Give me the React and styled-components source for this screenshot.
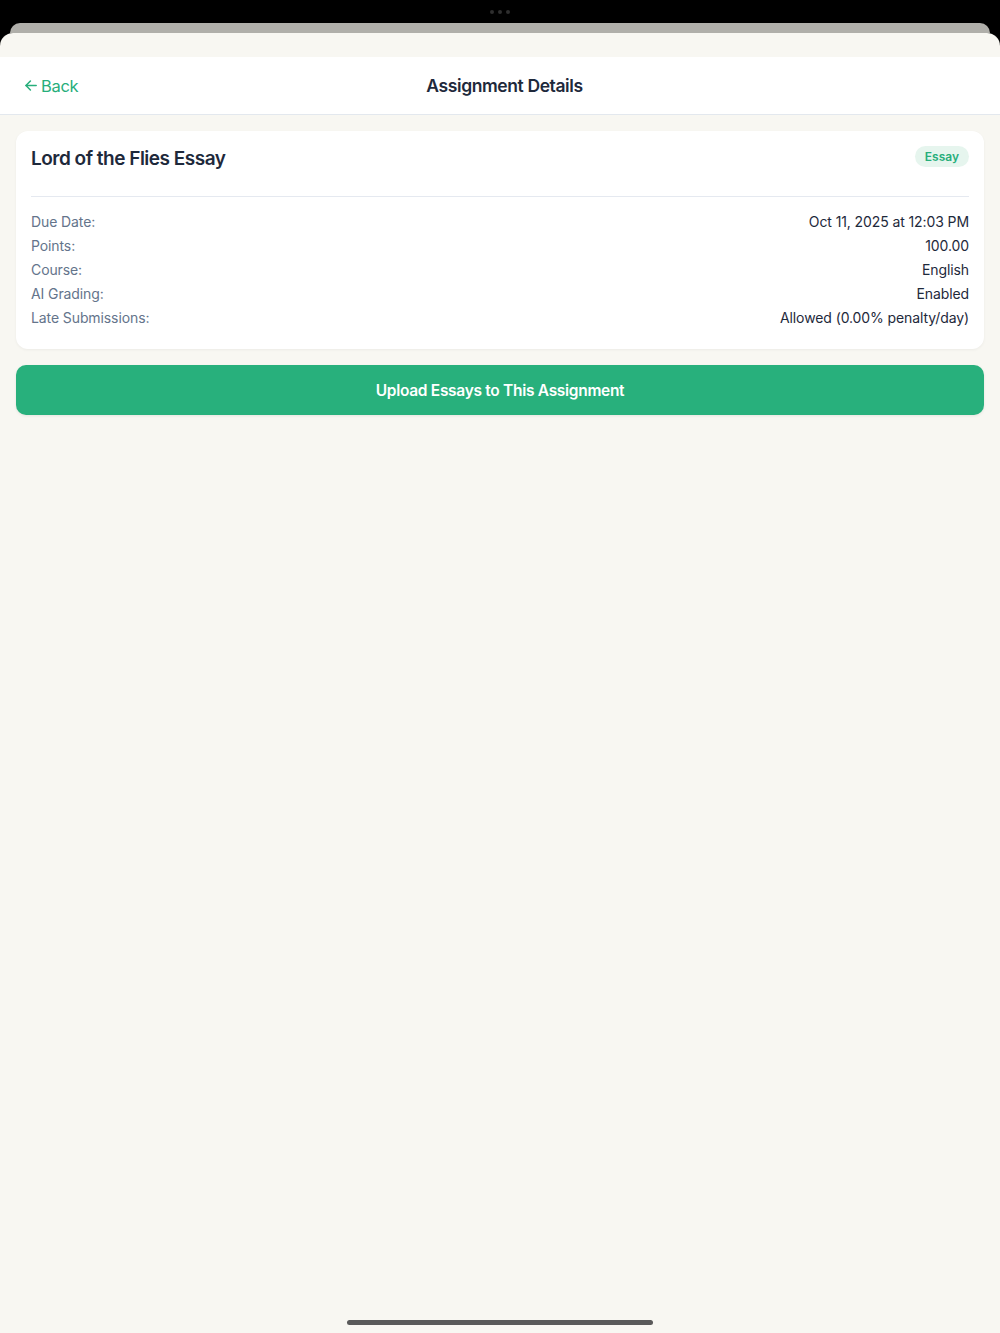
import React from "react";
import styled, { createGlobalStyle } from "styled-components";

const Global = createGlobalStyle`
  html, body { margin: 0; padding: 0; background: #000; }
  body { font-family: Inter, "Noto Sans", "Liberation Sans", sans-serif; -webkit-font-smoothing: antialiased; }
  * { box-sizing: border-box; }
`;

const Screen = styled.div`
  position: relative;
  width: 1000px;
  height: 1333px;
  background: #000;
  display: flex;
  flex-direction: column;
  overflow: hidden;
`;

const TopBar = styled.div`
  height: 23px;
  display: flex;
  justify-content: center;
  align-items: center;
  gap: 4px;
`;

const Dot = styled.span`
  width: 4px;
  height: 4px;
  border-radius: 50%;
  background: #2e2e2e;
`;

const BackSheet = styled.div`
  height: 10px;
  margin: 0 10px;
  background: #b0afaa;
  border-radius: 10px 10px 0 0;
`;

const Sheet = styled.div`
  flex: 1;
  background: #f8f7f2;
  border-radius: 13px 13px 0 0;
  padding-top: 24px;
  display: flex;
  flex-direction: column;
`;

const Header = styled.header`
  height: 58px;
  background: #fff;
  border-bottom: 1px solid #e3e8ee;
  display: grid;
  grid-template-columns: 78px 1fr 70px;
  align-items: center;
  padding: 0 24px 0 25px;
`;

const BackButton = styled.button`
  display: flex;
  align-items: center;
  gap: 4px;
  border: none;
  background: none;
  padding: 0;
  color: #27ae7b;
  font-family: inherit;
  font-size: 16.5px;
  letter-spacing: -0.3px;
  cursor: pointer;
`;

const Title = styled.h1`
  margin: 0;
  text-align: center;
  font-size: 17.5px;
  font-weight: 600;
  letter-spacing: -0.4px;
  color: #1e293b;
`;

const Content = styled.main`
  padding: 16px;
  display: flex;
  flex-direction: column;
  gap: 16px;
`;

const Card = styled.section`
  background: #fff;
  border-radius: 12px;
  padding: 15px 15px 19px;
  box-shadow: 0 1px 3px rgba(0, 0, 0, 0.05);
`;

const CardHead = styled.div`
  display: flex;
  justify-content: space-between;
  align-items: flex-start;
  padding-bottom: 25px;
  border-bottom: 1px solid #e5e9f0;
  margin-bottom: 13px;
`;

const CardTitle = styled.h2`
  margin: 0;
  padding-top: 1px;
  font-size: 19px;
  line-height: 24px;
  font-weight: 600;
  letter-spacing: -0.5px;
  color: #1e293b;
`;

const Badge = styled.span`
  background: #e6f5ee;
  color: #27ae7b;
  font-size: 12px;
  font-weight: 600;
  line-height: 21px;
  padding: 0 10px;
  border-radius: 11px;
`;

const Row = styled.div`
  display: flex;
  justify-content: space-between;
  font-size: 14px;
  line-height: 24px;
  letter-spacing: -0.1px;
`;

const Label = styled.span`
  color: #64748b;
`;

const Value = styled.span`
  color: #1e293b;
`;

const PrimaryButton = styled.button`
  height: 50px;
  border: none;
  border-radius: 10px;
  background: #28b07c;
  color: #fff;
  font-family: inherit;
  font-size: 15.5px;
  font-weight: 600;
  letter-spacing: -0.3px;
  box-shadow: 0 1px 3px rgba(0, 0, 0, 0.08);
  cursor: pointer;
`;

const HomeIndicator = styled.div`
  position: absolute;
  left: 347px;
  bottom: 8px;
  width: 306px;
  height: 5px;
  border-radius: 3px;
  background: #5a5a5a;
`;

const details = [
  ["Due Date:", "Oct 11, 2025 at 12:03 PM"],
  ["Points:", "100.00"],
  ["Course:", "English"],
  ["AI Grading:", "Enabled"],
  ["Late Submissions:", "Allowed (0.00% penalty/day)"],
];

export default function App() {
  return (
    <Screen>
      <Global />
      <TopBar>
        <Dot />
        <Dot />
        <Dot />
      </TopBar>
      <BackSheet />
      <Sheet>
        <Header>
          <BackButton>
            <svg width="12" height="11" viewBox="0 0 12 11" fill="none" stroke="currentColor" strokeWidth="1.5" strokeLinecap="round" strokeLinejoin="round">
              <path d="M11.2 5.5H1" />
              <path d="M5.4 1L1 5.5l4.4 4.5" />
            </svg>
            Back
          </BackButton>
          <Title>Assignment Details</Title>
          <span />
        </Header>
        <Content>
          <Card>
            <CardHead>
              <CardTitle>Lord of the Flies Essay</CardTitle>
              <Badge>Essay</Badge>
            </CardHead>
            {details.map(([l, v]) => (
              <Row key={l}>
                <Label>{l}</Label>
                <Value>{v}</Value>
              </Row>
            ))}
          </Card>
          <PrimaryButton>Upload Essays to This Assignment</PrimaryButton>
        </Content>
      </Sheet>
      <HomeIndicator />
    </Screen>
  );
}
